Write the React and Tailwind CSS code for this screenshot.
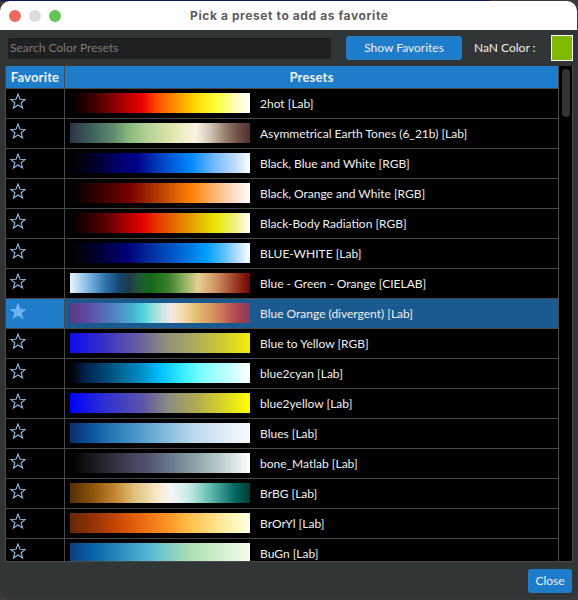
import React from 'react';

const presets = [
    { name: '2hot [Lab]', stops: '#000000 0%, #4a0000 15%, #a00000 28%, #ec0000 40%, #ff4a00 48%, #ff9a00 60%, #ffdc00 70%, #ffff40 82%, #ffffd0 94%, #ffffff 100%' },
    { name: 'Asymmetrical Earth Tones (6_21b) [Lab]', stops: '#2c3248 0%, #43685f 14%, #628f6e 25%, #8ab97e 33%, #b8d296 44%, #e2e8b0 58%, #f4f0d0 66%, #fbf3e6 70%, #d0c4b4 78%, #98806e 86%, #6b4c44 94%, #54302e 100%' },
    { name: 'Black, Blue and White [RGB]', stops: '#000000 0%, #000030 15%, #000070 28%, #000088 37%, #0040c0 50%, #0088ff 67%, #70b8ff 80%, #c0deff 92%, #ffffff 100%' },
    { name: 'Black, Orange and White [RGB]', stops: '#000000 0%, #380000 17%, #780000 33%, #b84000 50%, #ff8000 67%, #ffb470 80%, #ffe0cc 92%, #ffffff 100%' },
    { name: 'Black-Body Radiation [RGB]', stops: '#000000 0%, #500000 18%, #b00000 32%, #e60000 40%, #e64000 50%, #e68000 62%, #e6c000 74%, #e6e600 80%, #f0f080 92%, #ffffff 100%' },
    { name: 'BLUE-WHITE [Lab]', stops: '#000000 0%, #000030 15%, #000078 32%, #0030a0 45%, #0060d0 60%, #00a0ff 76%, #60c0ff 86%, #c0e4ff 94%, #ffffff 100%' },
    { name: 'Blue - Green - Orange [CIELAB]', stops: '#e8f4ff 0%, #80b8e4 10%, #2c70a8 20%, #14456e 28%, #1e3c48 33%, #1e5c30 39%, #126a18 45%, #3c8030 55%, #8ab060 63%, #e4d090 71%, #d49868 80%, #b05a3c 88%, #861c10 96%, #6c0808 100%' },
    { name: 'Blue Orange (divergent) [Lab]', stops: '#5f3a80 0%, #5d479f 8%, #5478bd 22%, #48aed0 34%, #4ccfdc 40%, #a8e2dc 48%, #e4e4e8 54%, #f2e8ec 56%, #f2dcb0 62%, #e4c070 70%, #d89a60 78%, #c86c58 86%, #ac4450 93%, #883c5c 100%' },
    { name: 'Blue to Yellow [RGB]', stops: '#0c0cf0 0%, #3c34c4 20%, #6c64a0 40%, #8c8c80 52%, #aaa860 68%, #d0ca30 85%, #f0f008 100%' },
    { name: 'blue2cyan [Lab]', stops: '#000000 0%, #00204c 8%, #00507c 22%, #0090c8 40%, #00c0ff 50%, #40f0ff 64%, #80ffff 74%, #c0ffff 88%, #ffffff 100%' },
    { name: 'blue2yellow [Lab]', stops: '#0000ff 0%, #3030d0 20%, #5c54a8 40%, #8c8c80 55%, #b0aa50 70%, #d8d428 85%, #ffff00 100%' },
    { name: 'Blues [Lab]', stops: '#08306b 0%, #0b559f 12%, #2b7bba 25%, #539ecd 40%, #89bedc 55%, #bad6eb 68%, #d5e5f4 80%, #f7fbff 100%' },
    { name: 'bone_Matlab [Lab]', stops: '#000000 0%, #202028 16%, #403f54 32%, #50506c 42%, #708090 58%, #8ea4a8 70%, #c0d0d0 85%, #ffffff 100%' },
    { name: 'BrBG [Lab]', stops: '#543005 0%, #8c510a 12%, #bf812d 24%, #dfc27d 36%, #f6e8c3 48%, #f5f5f5 56%, #c7eae5 66%, #80cdc1 74%, #35978f 84%, #01665e 92%, #003c30 100%' },
    { name: 'BrOrYl [Lab]', stops: '#662506 0%, #993404 14%, #cc4c02 28%, #ec7014 42%, #fe9929 56%, #fec44f 68%, #fee391 82%, #fff7bc 92%, #ffffe5 100%' },
    { name: 'BuGn [Lab]', stops: '#084081 0%, #0868ac 14%, #2b8cbe 28%, #4eb3d3 42%, #7bccc4 54%, #a8ddb5 66%, #ccebc5 80%, #e0f3db 90%, #f7fcf0 100%' },
];

const StarIcon = ({ filled }) => (
    <svg width="16" height="16" viewBox="0 0 16 16" className="block">
        <path
            d="M8 1 L10 6.2 L15.3 6.4 L11.1 9.7 L12.6 15 L8 12 L3.4 15 L4.9 9.7 L0.7 6.4 L6 6.2 Z"
            fill={filled ? '#6db3f2' : 'none'}
            stroke={filled ? '#6db3f2' : '#8fbce8'}
            strokeWidth="1.1"
        />
    </svg>
);

const PresetRow = ({ preset, selected }) => (
    <div className={`flex h-[30px] shrink-0 border-b border-[#4a4a4a] ${selected ? 'bg-[#1b5a90]' : 'bg-black'}`}>
        <div className={`w-[59px] shrink-0 border-r border-[#4a4a4a] pl-[4px] pt-[4px] ${selected ? 'bg-[#1e7dca]' : ''}`}>
            <StarIcon filled={selected} />
        </div>
        <div className="flex flex-1 items-start pl-[5px] pt-[4px]">
            <div className="h-[20px] w-[180px] shrink-0" style={{ background: `linear-gradient(to right, ${preset.stops})` }} />
            <span className="ml-[10px] whitespace-nowrap text-[12px] leading-[22px] text-[#f0f0f0]">{preset.name}</span>
        </div>
    </div>
);

export default function App() {
    return (
        <div className="h-[600px] w-[578px] overflow-hidden bg-[#3a3a3e] font-['Lato','Noto_Sans',sans-serif]">
            <div className="h-px w-[490px] bg-[#0c1560]" />
            <div className="flex h-[598px] w-[577px] flex-col overflow-hidden rounded-[10px] bg-[#313536]">
                {/* title bar */}
                <div className="flex h-[29px] shrink-0 items-center bg-white pl-[9px]">
                    <div className="flex gap-[8px]">
                        <span className="h-[12px] w-[12px] rounded-full bg-[#ec6a5e]" />
                        <span className="h-[12px] w-[12px] rounded-full bg-[#dcdcdc]" />
                        <span className="h-[12px] w-[12px] rounded-full bg-[#61c554]" />
                    </div>
                    <div className="ml-[129px] whitespace-nowrap font-['Inter',sans-serif] text-[12px] font-bold tracking-[0.6px] text-[#5c5c5c]">
                        Pick a preset to add as favorite
                    </div>
                </div>

                {/* toolbar */}
                <div className="flex h-[36px] shrink-0 items-center pl-[8px]">
                    <div className="flex h-[21px] w-[323px] items-center rounded-[2px] bg-[#1e2021] pl-[2px] text-[12px] text-[#7c7c7c]">
                        Search Color Presets
                    </div>
                    <button className="ml-[15px] h-[24px] w-[116px] rounded-[3px] bg-[#1e7dca] text-[12px] text-[#f0f0f0]">
                        Show Favorites
                    </button>
                    <span className="ml-[12px] w-[61px] whitespace-nowrap text-[12px] text-[#f0f0f0]">NaN Color :</span>
                    <div className="ml-[16px] h-[26px] w-[22px] shrink-0 border border-white bg-[#7fba00]" />
                </div>

                {/* table */}
                <div className="ml-[5px] mr-[4px] flex h-[496px] shrink-0 overflow-hidden border-b border-l border-[#4a4a4a]">
                    <div className="flex h-full w-[552px] flex-col overflow-hidden">
                        <div className="flex h-[23px] shrink-0 border-b border-[#4a4a4a] bg-[#1e7dca] text-[13px] font-bold leading-[22px] tracking-[0.2px] text-[#f0f0f0]">
                            <div className="w-[59px] shrink-0 border-r border-[#4a4a4a] text-center">Favorite</div>
                            <div className="flex-1 text-center">Presets</div>
                        </div>
                        {presets.map((preset) => (
                            <PresetRow key={preset.name} preset={preset} selected={preset.name.startsWith('Blue Orange')} />
                        ))}
                    </div>
                    {/* scrollbar */}
                    <div className="flex-1 border-x border-[#4a4a4a] bg-black pl-[3px] pt-[3px]">
                        <div className="h-[48px] w-[8px] rounded-full bg-[#303436]" />
                    </div>
                </div>

                {/* footer */}
                <div className="flex flex-1 items-start justify-end pr-[5px] pt-[7px]">
                    <button className="h-[24px] w-[44px] rounded-[3px] bg-[#1e7dca] text-[12px] text-[#f0f0f0]">Close</button>
                </div>
            </div>
        </div>
    );
}
